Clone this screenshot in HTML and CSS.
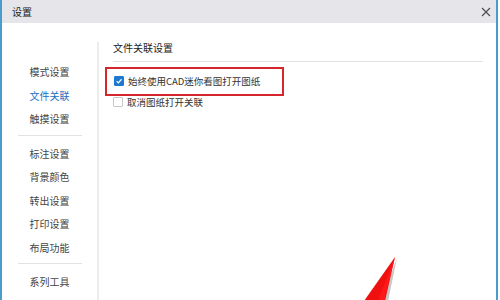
FILE: index.html
```html
<!DOCTYPE html>
<html lang="zh-CN">
<head>
<meta charset="utf-8">
<title>设置</title>
<link rel="stylesheet" href="styles.css">
</head>
<body>
<div class="window">
  <div class="titlebar">
    <span class="title">设置</span>
    <svg class="close" width="10" height="10" viewBox="0 0 10 10"><path d="M1 1L9 9M9 1L1 9" stroke="#4a4a4a" stroke-width="1.1" fill="none"/></svg>
  </div>
  <div class="main">
    <nav class="sidebar">
      <div class="item">模式设置</div>
      <div class="item active">文件关联</div>
      <div class="item">触摸设置</div>
      <div class="sep"></div>
      <div class="item">标注设置</div>
      <div class="item">背景颜色</div>
      <div class="item">转出设置</div>
      <div class="item">打印设置</div>
      <div class="item">布局功能</div>
      <div class="sep"></div>
      <div class="item">系列工具</div>
    </nav>
    <section class="content">
      <div class="heading">文件关联设置</div>
      <label class="option highlight"><span class="box checked"><svg width="10" height="10" viewBox="0 0 10 10"><path d="M2 5.2L4.2 7.3L8.2 2.8" stroke="#fff" stroke-width="1.5" fill="none"/></svg></span><span>始终使用CAD迷你看图打开图纸</span></label>
      <label class="option"><span class="box"></span><span>取消图纸打开关联</span></label>
    </section>
  </div>
  <svg class="arrow" width="60" height="50" viewBox="0 0 60 50"><polygon points="37,1 28,44 21,44" fill="#c8c8c8"/><polygon points="35,0 25,44 4,44" fill="#f01010"/><polygon points="35,0 24,44 18,44" fill="#ff1a1a"/></svg>
</div>
</body>
</html>
```
FILE: styles.css
```css
* { box-sizing: border-box; }
html, body { margin: 0; padding: 0; background: #fff; }
body {
  width: 500px;
  height: 300px;
  overflow: hidden;
  font-family: "Noto Sans CJK SC", "Microsoft YaHei", sans-serif;
  color: #333;
}
.window {
  position: relative;
  width: 498px;
  height: 300px;
  border-left: 2px solid #4a9ccc;
  border-right: 2px solid #4a9ccc;
  background: #fff;
  display: flex;
  flex-direction: column;
}
.titlebar {
  height: 23px;
  background: #e6e6ea;
  display: flex;
  align-items: center;
  justify-content: space-between;
  padding: 0 4px 0 10px;
  flex: none;
}
.title { font-size: 10px; color: #222; line-height: 12px; }
.close { display: block; margin-right: 1px; }
.main { flex: 1; display: flex; min-height: 0; }
.sidebar {
  width: 97px;
  flex: none;
  margin-top: 19px;
  padding-top: 18px;
  border-right: 2px solid #ececec;
  display: flex;
  flex-direction: column;
}
.item {
  height: 23.5px;
  line-height: 23.5px;
  font-size: 10px;
  text-align: center;
  color: #444;
}
.item.active { color: #1a6ec0; }
.sep {
  height: 1px;
  background: #e2e2e2;
  margin: 4px 15px 6px 16px;
}
.content {
  flex: 1;
  padding: 17px 13px 0 14px;
  display: flex;
  flex-direction: column;
  align-items: flex-start;
}
.heading {
  align-self: stretch;
  font-size: 10px;
  line-height: 16px;
  color: #222;
  padding-bottom: 5px;
  border-bottom: 1px solid #e2e2e2;
}
.option {
  display: flex;
  align-items: center;
  font-size: 9.5px;
  line-height: 12px;
  color: #333;
  gap: 4px;
}
.highlight {
  margin-top: 5px;
  margin-left: -8px;
  width: 179px;
  height: 29px;
  border: 2px solid #d4262c;
  padding: 0 0 1px 7px;
}
.option + .option { margin-top: 0; height: 12px; }
.box {
  width: 10px;
  height: 10px;
  border: 1px solid #c8c8c8;
  border-radius: 1px;
  background: #fff;
  display: flex;
  align-items: center;
  justify-content: center;
  flex: none;
}
.box.checked { background: #1e78d0; border-color: #1e78d0; }
.box svg { display: block; }
.arrow { position: absolute; left: 358px; top: 257px; }
```
